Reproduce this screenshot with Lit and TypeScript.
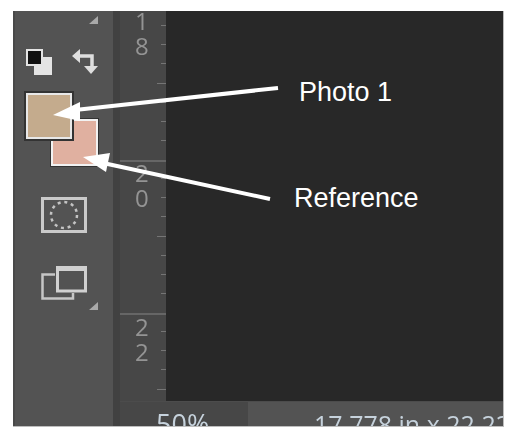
import { LitElement, html, css, svg } from 'lit';
import { customElement } from 'lit/decorators.js';

const TICK = 19.125;

@customElement('app-root')
export class AppRoot extends LitElement {
  static styles = css`
    :host {
      display: block;
      width: 513px;
      height: 437px;
      background: #fff;
      padding: 11px 9px 10px 13px;
      box-sizing: border-box;
      font-family: 'Open Sans', sans-serif;
    }
    .frame {
      position: relative;
      display: flex;
      width: 491px;
      height: 416px;
      background: #535353;
      overflow: hidden;
      box-sizing: border-box;
      border-right: 1px solid #bdbdbd;
      border-bottom: 1px solid #bdbdbd;
    }
    .tools {
      width: 100px;
      flex: none;
      display: flex;
      flex-direction: column;
      border-left: 2px solid #494949;
      box-sizing: border-box;
      filter: blur(0.5px);
    }
    .corner {
      align-self: flex-end;
      margin: 5px 15px 0 0;
      display: block;
    }
    .top-icons {
      display: flex;
      gap: 20px;
      margin: 25px 0 0 11px;
    }
    .swatches {
      display: grid;
      margin: 16px 0 0 9px;
    }
    .swatch {
      grid-area: 1 / 1;
      box-sizing: border-box;
      border-style: solid;
      outline-style: solid;
    }
    .fg {
      width: 46px;
      height: 46px;
      margin: 2px;
      background: #c4ab8d;
      border-width: 2px;
      border-color: #e8e8e8;
      outline-width: 2px;
      outline-color: #333;
      z-index: 1;
    }
    .bg {
      width: 47px;
      height: 47px;
      margin: 28px 0 0 27px;
      background: #e0b0a0;
      border-width: 2px;
      border-color: #f2f2f2;
      outline-width: 1px;
      outline-color: #333;
    }
    .mask {
      display: block;
      margin: 31px 0 0 26px;
    }
    .screen {
      display: block;
      margin: 33px 0 0 26px;
    }
    .corner-2 {
      align-self: flex-end;
      margin: 2px 15px 0 0;
      display: block;
    }
    .split {
      width: 7px;
      flex: none;
      background: #414141;
    }
    .main {
      flex: 1;
      min-width: 0;
      display: flex;
      flex-direction: column;
    }
    .work {
      height: 390px;
      flex: none;
      display: flex;
    }
    .ruler {
      width: 46px;
      flex: none;
      background: #474747;
      overflow: hidden;
      filter: blur(0.5px);
    }
    .section {
      height: 153px;
      display: flex;
      justify-content: space-between;
      box-sizing: border-box;
      border-top: 2px solid #666;
    }
    .section.first {
      border-top: none;
      margin-top: -4px;
    }
    .digits {
      margin-left: 15px;
      font-size: 24px;
      line-height: 25px;
      color: #949494;
    }
    .digits div {
      height: 25px;
    }
    .ticks {
      width: 12px;
      display: flex;
      flex-direction: column;
      align-items: flex-end;
    }
    .tick {
      flex: none;
      height: ${TICK}px;
      display: flex;
      align-items: flex-end;
    }
    .tick i {
      display: block;
      width: 5px;
      height: 1px;
      background: #757575;
    }
    .tick.long i {
      width: 9px;
    }
    .canvas {
      flex: 1;
      background: #282828;
    }
    .status {
      flex: 1;
      min-height: 0;
      display: flex;
      border-top: 1px solid #4c4c4c;
      line-height: 44px;
      color: #c6d2dc;
      white-space: nowrap;
      filter: blur(0.5px);
    }
    .zoom {
      width: 128px;
      flex: none;
      background: #474747;
      padding-left: 36px;
      box-sizing: border-box;
      font-size: 27px;
    }
    .size {
      flex: 1;
      min-width: 0;
      overflow: hidden;
      padding-left: 66px;
      font-size: 25px;
    }
    .arrows {
      position: absolute;
      left: 0;
      top: 0;
      pointer-events: none;
    }
    .label {
      position: absolute;
      font-family: 'Liberation Sans', Arial, sans-serif;
      font-size: 27px;
      line-height: 30px;
      color: #fff;
      white-space: nowrap;
    }
    .l1 { left: 286px; top: 66px; }
    .l2 { left: 281px; top: 172px; }
  `;

  private triangle(cls: string) {
    return html`<svg class=${cls} width="9" height="8" viewBox="0 0 9 8">
      <path d="M9 0V8H0Z" fill="#a9a9a9" />
    </svg>`;
  }

  // one stretch of the ruler, digits on the left and ticks on the right
  private section(digits: string[], rows: number, longAt: number, first = false, digitTop = 0) {
    const marks = Array.from({ length: rows }, (_, i) => i + 1);
    return html`<div class="section ${first ? 'first' : ''}">
      <div class="digits" style="margin-top:${digitTop}px">
        ${digits.map((d) => html`<div>${d}</div>`)}
      </div>
      <div class="ticks" style="margin-top:${first ? 0 : -2}px">
        ${marks.map((m) => html`<div class="tick ${m === longAt ? 'long' : ''}"><i></i></div>`)}
      </div>
    </div>`;
  }

  render() {
    return html`<div class="frame">
      <div class="tools">
        ${this.triangle('corner')}
        <div class="top-icons">
          <svg width="26" height="26" viewBox="0 0 26 26">
            <rect x="8" y="8" width="18" height="18" fill="#e4e4e4" />
            <rect x="1" y="1" width="15" height="15" fill="#111" stroke="#e4e4e4" stroke-width="2" />
          </svg>
          <svg width="26" height="26" viewBox="0 0 26 26">
            <path d="M6 7H20V18" fill="none" stroke="#dedede" stroke-width="3.500" />
            <path d="M0 7L8 0V14Z M12 17H26L19 25Z" fill="#dedede" />
          </svg>
        </div>
        <div class="swatches">
          <div class="swatch bg"></div>
          <div class="swatch fg"></div>
        </div>
        <svg class="mask" width="46" height="36" viewBox="0 0 46 36">
          <rect x="1.500" y="1.500" width="43" height="33" fill="none" stroke="#cacaca" stroke-width="3" />
          <circle cx="23" cy="18" r="13" fill="none" stroke="#c4c4c4" stroke-width="2.500" stroke-dasharray="3 3.800" />
        </svg>
        <svg class="screen" width="46" height="34" viewBox="0 0 46 34">
          <path d="M14 8.500H1.500V32.500H32V27" fill="none" stroke="#c6c6c6" stroke-width="2.500" />
          <rect x="16.500" y="2" width="28" height="23" fill="#535353" stroke="#d0d0d0" stroke-width="3" />
          <rect x="15" y="0" width="31" height="5" fill="#d0d0d0" />
        </svg>
        ${this.triangle('corner-2')}
      </div>
      <div class="split"></div>
      <div class="main">
        <div class="work">
          <div class="ruler">
            ${this.section(['1', '8'], 7, 4, true, 1)}
            ${this.section(['2', '0'], 7, 4, false, -2)}
            ${this.section(['2', '2'], 4, 4, false, -1)}
          </div>
          <div class="canvas"></div>
        </div>
        <div class="status">
          <div class="zoom">50%</div>
          <div class="size">17.778 in x 22.222 in (300 ppi)</div>
        </div>
      </div>
      <svg class="arrows" width="490" height="415" viewBox="0 0 490 415">
        ${svg`<path d="M265 77L62 99" stroke="#fff" stroke-width="4" />
          <path d="M40 104L67 91L67 110Z" fill="#fff" />
          <path d="M257 188L90 152" stroke="#fff" stroke-width="4" />
          <path d="M70 146L97 142L93 161Z" fill="#fff" />`}
      </svg>
      <div class="label l1">Photo 1</div>
      <div class="label l2">Reference</div>
    </div>`;
  }
}
